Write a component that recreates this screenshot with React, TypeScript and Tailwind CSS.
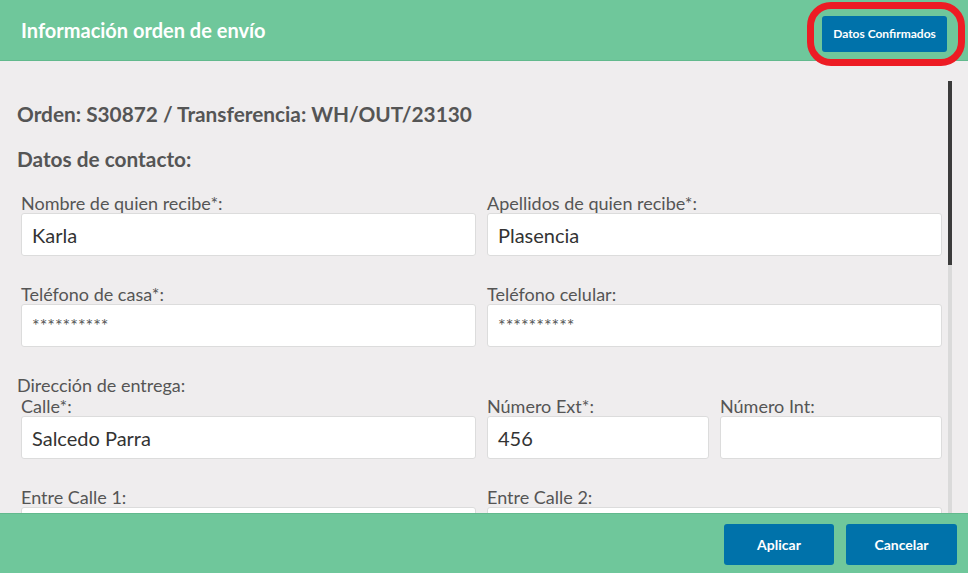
import React from "react";

const FONT = { fontFamily: "Lato, 'Open Sans', sans-serif" };

function Field({ label, value, masked }: { label: string; value?: string; masked?: boolean }) {
  return (
    <div className="flex flex-col">
      <label className="block h-5 text-[18px] leading-5 text-[#555]">{label}</label>
      <div
        className={`flex h-[43px] items-center rounded-[3px] border border-[#dcdcdc] bg-white px-[10px] ${
          masked ? "text-[18px] text-[#555]" : "text-[20px] text-[#333]"
        }`}
      >
        {value}
      </div>
    </div>
  );
}

export default function App() {
  return (
    <div style={FONT} className="flex h-[573px] w-[968px] flex-col overflow-hidden bg-[#efedee]">
      {/* Header */}
      <div className="relative flex h-[61px] shrink-0 items-start justify-between border-b border-[#62b98d] bg-[#6fc79b] pl-[21px] pr-[21px]">
        <h1 className="self-center text-[20px] font-bold text-white">Información orden de envío</h1>
        <div className="relative mt-[16px]">
          <button
            type="button"
            className="flex h-[36px] w-[125px] items-center justify-center rounded-[3px] bg-[#0072aa] text-[12px] font-bold text-white"
          >
            Datos Confirmados
          </button>
          {/* annotation ring */}
          <div className="pointer-events-none absolute -top-[14px] -right-[18px] -bottom-[14px] -left-[15px] rounded-[24px] border-[7px] border-[#ed1c24]" />
        </div>
      </div>

      {/* Body */}
      <div className="flex min-h-0 flex-1 overflow-hidden">
        <div className="flex-1 pl-[17px] pt-[40px]">
          <h2 className="text-[20.8px] leading-[26px] font-bold text-[#555]">
            Orden: S30872 / Transferencia: WH/OUT/23130
          </h2>
          <h3 className="mt-[19px] text-[20.8px] leading-[26px] font-bold text-[#555]">Datos de contacto:</h3>

          <div className="ml-[4px] mt-[21px] grid w-[921px] grid-cols-2 gap-x-[11px] gap-y-[28px]">
            <Field label="Nombre de quien recibe*:" value="Karla" />
            <Field label="Apellidos de quien recibe*:" value="Plasencia" />
            <Field label="Teléfono de casa*:" value="**********" masked />
            <Field label="Teléfono celular:" value="**********" masked />
          </div>

          <p className="mt-[28px] h-5 text-[18px] leading-5 text-[#555]">Dirección de entrega:</p>
          <div className="ml-[4px] mt-[1px] grid w-[921px] grid-cols-2 gap-x-[11px] gap-y-[28px]">
            <Field label="Calle*:" value="Salcedo Parra" />
            <div className="grid grid-cols-2 gap-x-[11px]">
              <Field label="Número Ext*:" value="456" />
              <Field label="Número Int:" />
            </div>
            <Field label="Entre Calle 1:" />
            <Field label="Entre Calle 2:" />
          </div>
        </div>

        {/* Scrollbar */}
        <div className="mr-[16px] flex w-[4px] flex-col pt-[20px]">
          <div className="h-[184px] bg-[#3b3b3b]" />
          <div className="flex-1 bg-[#dadada]" />
        </div>
      </div>

      {/* Footer */}
      <div className="flex h-[60px] shrink-0 items-start justify-end gap-[12px] border-t border-[#62b98d] bg-[#6fc79b] pr-[11px] pt-[10px]">
        <button
          type="button"
          className="h-[41px] w-[110px] rounded-[3px] bg-[#0072aa] text-[14px] font-bold text-white"
        >
          Aplicar
        </button>
        <button
          type="button"
          className="h-[41px] w-[111px] rounded-[3px] bg-[#0072aa] text-[14px] font-bold text-white"
        >
          Cancelar
        </button>
      </div>
    </div>
  );
}
